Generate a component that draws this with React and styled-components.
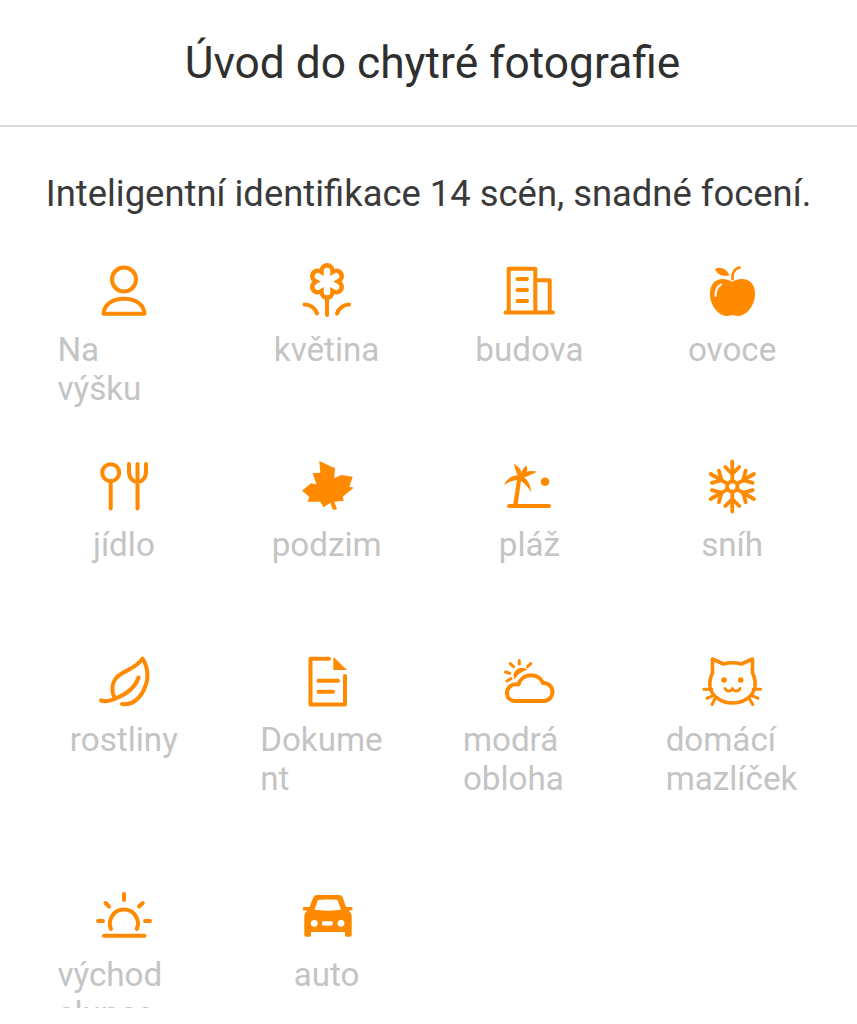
import React from "react";
import styled, { createGlobalStyle } from "styled-components";

const Global = createGlobalStyle`
  html, body { margin: 0; padding: 0; background: #fff; }
  body { font-family: Roboto, "Liberation Sans", sans-serif; }
`;

const Page = styled.div`
  width: 857px;
  height: 1008px;
  overflow: hidden;
  background: #fff;
`;
const Header = styled.header`
  height: 123px;
  padding: 2px 0 0 8px;
  display: flex;
  align-items: center;
  justify-content: center;
  border-bottom: 2px solid #d9d9d9;
`;
const Title = styled.h1`
  margin: 0;
  font-size: 44.3px;
  font-weight: 400;
  line-height: 1;
  color: #2f2f2f;
`;
const Subtitle = styled.p`
  margin: 0;
  height: 134px;
  padding-top: 46px;
  box-sizing: border-box;
  text-align: center;
  font-size: 36.4px;
  font-weight: 400;
  line-height: 42px;
  color: #3a3a3a;
  white-space: nowrap;
`;
const Grid = styled.div`
  display: grid;
  grid-template-columns: repeat(4, 202.75px);
  grid-template-rows: 195px 195px 235px 195px;
  padding-left: 22.5px;
`;
const Cell = styled.div`
  display: flex;
  flex-direction: column;
  align-items: center;
`;
const IconBox = styled.svg`
  width: 60px;
  height: 60px;
  display: block;
  color: #ff8a00;
  fill: none;
  stroke: currentColor;
  stroke-width: 4;
  stroke-linecap: round;
  stroke-linejoin: round;
`;
const LabelBox = styled.div`
  width: 133px;
  margin-top: 8.5px;
  display: flex;
  justify-content: center;
`;
const Label = styled.span`
  min-width: 0;
  font-size: 33.2px;
  font-weight: 400;
  line-height: 39px;
  color: #c4c4c4;
  overflow-wrap: anywhere;
`;

const Solid = { fill: "currentColor", stroke: "none" };

const Person = () => (
  <>
    <circle cx="30" cy="18.5" r="12" />
    <path d="M9.5 52.7C10 43 19 37.7 30 37.7S50 43 50.5 52.7Z" />
  </>
);
const flowerAngles = [0, 60, 120, 180, 240, 300];
const Flower = () => (
  <>
    <g {...Solid}>
      {flowerAngles.map((a) => (
        <circle key={a} cx="30" cy="9.5" r="7.5" transform={`rotate(${a} 30 20.5)`} />
      ))}
      <circle cx="30" cy="20.5" r="10" />
    </g>
    <g stroke="#fff" strokeWidth="6.5">
      {flowerAngles.map((a) => (
        <line key={a} x1="30" y1="20.5" x2="30" y2="10" transform={`rotate(${a} 30 20.5)`} />
      ))}
    </g>
    <path d="M30 38V54M7.5 43.5C13 43.5 18 47 20 52.5M52 43.5C47 43.5 42 47 40 52.5" />
  </>
);
const Building = () => (
  <path d="M6.5 51.5H54M9.7 51.5V7.7H36.3V51.5M36.3 19.3H50.7V51.5M18.5 18H28M18.5 29H28M18.5 40H28" />
);
const Apple = () => (
  <>
    <path {...Solid} d="M30 21C35 17 53 14 53 33 53 45 44 55 36 55 33 55 32 54 30.5 54 29 54 28 55 25 55 17 55 8 45 8 33 8 14 26 17 30 21Z" />
    <path {...Solid} d="M13 8C18 5 25 8 27.5 14.5 21 15.5 15 14 13 8Z" />
    <path strokeWidth="2.8" d="M30.5 18C30 11 33 7.5 37.5 6.5" />
    <path stroke="#fff" strokeWidth="2" d="M13.5 35C13.5 29.5 15 25.5 19 23.5" />
  </>
);
const Cutlery = () => (
  <>
    <circle cx="16.7" cy="16.7" r="8.5" />
    <path d="M16.7 25V52.5M35 8V16C35 22 39 26 43.5 26S52 22 52 16V8M43.5 8V52.5" />
  </>
);
const Maple = () => (
  <path
    {...Solid}
    d="M22.3 5 38 12.3 37.3 22.3 44 19 55.7 20.7 52.3 30.7 56.7 31.7 45.7 40.7 46.7 44.7 37.3 45.7 40 53.3 36 54 33.3 46.7 26.7 51.3 23.3 45.7 10.7 45.7 12.3 40.7 5 34.7 14 27.3 19.5 28.5 15.7 17.3 23.3 16.7Z"
  />
);
const Palm = () => (
  <>
    <path d="M10 50H50" />
    <path {...Solid} d="M14 50 18.5 21H22.5L18.5 50Z" />
    <circle {...Solid} cx="46" cy="25.7" r="4.3" />
    <g {...Solid}>
      <path d="M5 29C8 22 15 18.5 21 19.5L20.5 24C14 24 9 26 5 29Z" />
      <path d="M15 8C19 10 23 14 23.5 20L19.5 20.5C17 16 15.5 12 15 8Z" />
      <path d="M27 9.5C29 12 28.5 15 27 18L22 20C22 16 24 12 27 9.5Z" />
      <path d="M38 15.7C32 14 25 15.5 21 19.5L23 22.5C27 20 33 19 38 15.7Z" />
      <path d="M21.5 19.5C27 21 32 28 32 36 29 31 25 26.5 20.5 24Z" />
    </g>
  </>
);
const Snow = () => (
  <g strokeWidth="3.8">
    <circle cx="30.3" cy="30.5" r="5.2" />
    {flowerAngles.map((a) => (
      <path
        key={a}
        transform={`rotate(${a} 30.3 30.5)`}
        d="M30.3 25.3V5.5M23.3 11 30.3 18 37.3 11"
      />
    ))}
  </g>
);
const Leaf = () => (
  <>
    <path d="M21 47C17 41 17.5 32 23 26 30 19 42 18 48.5 7.5 54 16 55 27 51 36 47 47 38 55 28 53" />
    <path d="M7 49.5C12 51 17 50 21.5 47.5 33 43 41 37 44.5 26.5" />
  </>
);
const Doc = () => (
  <>
    <path d="M32 7.7H13.5V53.5H48V25" />
    <path {...Solid} d="M36.3 5.7 50 19H36.3Z" />
    <path d="M21.5 29.7H41M21.5 40.7H36" />
  </>
);
const Cloud = () => (
  <>
    <path d="M17 50H45C50 50 53.5 45.5 53.5 41 53.5 35.5 49 31.5 44 32 42 27 37 24.3 32 24.3 26 24.3 21 28 19.5 33.5 13 32.5 8 36 8 42 8 47 12 50 17 50Z" />
    <path {...Solid} d="M15.5 28.5C12.5 22 17.5 16.7 23 16.7 25 16.7 27 17.5 28.5 19 23 20 18.5 23.5 15.5 28.5Z" />
    <path strokeWidth="3" d="M20.3 9.5V13M11.3 12.6 14.5 15.6M31.7 12.6 28.5 15.6M6.5 21 10.7 22.3M8 30 12 27.5" />
  </>
);
const Cat = () => (
  <g strokeWidth="3.6">
    <path d="M10.5 8 21.5 13C27 11.5 34 11.5 39.5 13L50.5 8V22C53 27 53.5 32 53 36 51 46 41 52 30.5 52 20 52 10 46 8 36 7.5 32 8 27 10.5 22Z" />
    <circle {...Solid} cx="22" cy="29" r="2.8" />
    <circle {...Solid} cx="38.7" cy="29" r="2.8" />
    <path strokeWidth="2.8" d="M23 37.5C25 41 29 41 30.5 37.5 32 41 36 41 38 37.5" />
    <path strokeWidth="3" d="M1.8 38.3H9.7M5 47.3 11.3 44.5M10 53.5 13 47.8M58.8 38.3H51M56 47.3 50 44.5M50.7 53.5 47.5 47.8" />
  </g>
);
const Sunrise = () => (
  <>
    <path d="M10 49.7H50.5" />
    <path d="M17 43A14 14 0 1 1 42.8 43" />
    <path d="M30 8V14M11.5 17 15 20.5M48.8 17 45 20.5M4 35H9M51 35H56" />
  </>
);
const Car = () => (
  <>
    <path
      {...Solid}
      fillRule="evenodd"
      d="M20 9H42C44 9 45 10 46 12L49 21H54.5C56 21 56 24.5 54.5 24.5H51.5C53.5 26 54.7 28 54.7 30V49C54.7 50 54 50.7 53 50.7H49.5C48.5 50.7 48 50 48 49V46H14V49C14 50 13.5 50.7 12.5 50.7H9C8 50.7 7.3 50 7.3 49V30C7.3 28 8.5 26 10.5 24.5H7C5.3 24.5 5.3 21 7 21H12.5L16 12C17 10 18 9 20 9ZM21 14 17.5 23.5C24 25 38 25 44 23.5L40.5 14C36 13.3 26 13.3 21 14Z"
    />
    <circle cx="17.3" cy="37.3" r="3.4" fill="#fff" stroke="none" />
    <circle cx="44" cy="37.3" r="3.4" fill="#fff" stroke="none" />
    <rect x="25" y="35.2" width="10.7" height="4.2" rx="0.8" fill="#fff" stroke="none" />
  </>
);

const scenes = [
  ["Na výšku", Person],
  ["květina", Flower],
  ["budova", Building],
  ["ovoce", Apple],
  ["jídlo", Cutlery],
  ["podzim", Maple],
  ["pláž", Palm],
  ["sníh", Snow],
  ["rostliny", Leaf],
  ["Dokument", Doc],
  ["modrá obloha", Cloud],
  ["domácí mazlíček", Cat],
  ["východ slunce", Sunrise],
  ["auto", Car],
];

export default function App() {
  return (
    <Page>
      <Global />
      <Header>
        <Title>Úvod do chytré fotografie</Title>
      </Header>
      <Subtitle>Inteligentní identifikace 14 scén, snadné focení.</Subtitle>
      <Grid>
        {scenes.map(([name, Glyph]) => (
          <Cell key={name}>
            <IconBox viewBox="0 0 60 60" aria-hidden="true">
              <Glyph />
            </IconBox>
            <LabelBox>
              <Label>{name}</Label>
            </LabelBox>
          </Cell>
        ))}
      </Grid>
    </Page>
  );
}
